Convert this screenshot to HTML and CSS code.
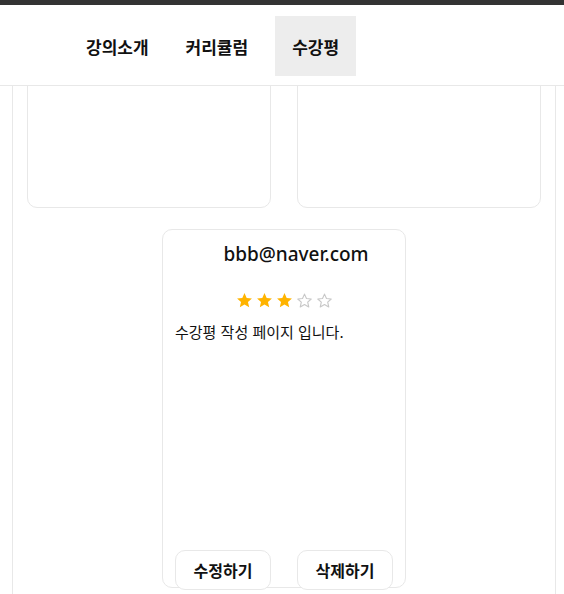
FILE: index.html
```html
<!DOCTYPE html>
<html lang="ko">
<head>
<meta charset="utf-8">
<title>수강평</title>
<link rel="stylesheet" href="styles.css">
</head>
<body>
<div class="topbar"></div>
<header class="header">
  <nav class="nav">
    <a class="nav-item">강의소개</a>
    <a class="nav-item">커리큘럼</a>
    <a class="nav-item active">수강평</a>
  </nav>
</header>
<main class="main">
  <div class="container">
    <div class="reviews">
      <div class="card card-short"></div>
      <div class="card card-short"></div>
      <div class="card review">
        <div class="email">bbb@naver.com</div>
        <div class="stars">
          <svg class="star on" viewBox="0 0 24 24"><path d="M12 1.5l3.1 6.9 7.4.7-5.6 5 1.7 7.4L12 17.6l-6.6 3.9 1.7-7.4-5.6-5 7.4-.7z"/></svg>
          <svg class="star on" viewBox="0 0 24 24"><path d="M12 1.5l3.1 6.9 7.4.7-5.6 5 1.7 7.4L12 17.6l-6.6 3.9 1.7-7.4-5.6-5 7.4-.7z"/></svg>
          <svg class="star on" viewBox="0 0 24 24"><path d="M12 1.5l3.1 6.9 7.4.7-5.6 5 1.7 7.4L12 17.6l-6.6 3.9 1.7-7.4-5.6-5 7.4-.7z"/></svg>
          <svg class="star off" viewBox="0 0 24 24"><path d="M12 3l2.8 6.2 6.7.7-5 4.5 1.5 6.7L12 17.6l-6 3.5 1.5-6.7-5-4.5 6.7-.7z"/></svg>
          <svg class="star off" viewBox="0 0 24 24"><path d="M12 3l2.8 6.2 6.7.7-5 4.5 1.5 6.7L12 17.6l-6 3.5 1.5-6.7-5-4.5 6.7-.7z"/></svg>
        </div>
        <p class="content">수강평 작성 페이지 입니다.</p>
        <div class="actions">
          <button class="btn">수정하기</button>
          <button class="btn">삭제하기</button>
        </div>
      </div>
    </div>
  </div>
</main>
</body>
</html>
```
FILE: styles.css
```css
* { box-sizing: border-box; }
html, body { margin: 0; padding: 0; }
body {
  width: 564px;
  height: 594px;
  overflow: hidden;
  background: #fff;
  font-family: "Noto Sans CJK KR", "Noto Sans", sans-serif;
  color: #000;
}
.topbar { height: 5px; background: #333; }
.header {
  height: 81px;
  border-bottom: 1px solid #e8e8e8;
  padding-top: 11px;
}
.nav {
  display: flex;
  gap: 3px;
  padding-left: 69px;
}
.nav-item {
  display: flex;
  align-items: center;
  height: 60px;
  padding: 0 17px;
  font-size: 17px;
  font-weight: 700;
  color: #111;
  text-decoration: none;
}
.nav-item:nth-child(3) { margin-left: 7px; }
.nav-item.active { background: #ededed; }

.main { height: 508px; overflow: hidden; }
.container {
  display: flow-root;
  margin-left: 12px;
  width: 544px;
  height: 100%;
  border-left: 1px solid #e8e8e8;
  border-right: 1px solid #e8e8e8;
  padding: 0 14px;
}
.reviews {
  display: flex;
  flex-wrap: wrap;
  justify-content: center;
  column-gap: 26px;
  row-gap: 21px;
  margin-top: -78px;
}
.card {
  width: 244px;
  border: 1px solid #e8e8e8;
  border-radius: 10px;
  background: #fff;
}
.card-short { height: 200px; }
.card.review {
  height: 359px;
  display: flex;
  flex-direction: column;
  padding: 0 12px;
}
.email {
  margin-top: 12px;
  padding-left: 24px;
  text-align: center;
  font-family: "Noto Sans", sans-serif;
  font-size: 19px;
  font-weight: 500;
  line-height: 24px;
  color: #111;
}
.stars {
  display: flex;
  justify-content: center;
  gap: 3px;
  margin-top: 26px;
  height: 16px;
}
.star { width: 17px; height: 17px; }
.star.on path { fill: #ffb400; }
.star.off path { fill: none; stroke: #c8c8c8; stroke-width: 1.6; stroke-linejoin: round; }
.content {
  margin: 14px 0 0;
  font-size: 15px;
  line-height: 20px;
  color: #111;
}
.actions {
  margin-top: auto;
  margin-bottom: -3px;
  display: flex;
  justify-content: space-between;
}
.btn {
  width: 96px;
  height: 40px;
  background: #fff;
  border: 1px solid #e8e8e8;
  border-radius: 10px;
  font-family: "Noto Sans CJK KR", sans-serif;
  font-size: 16px;
  font-weight: 700;
  color: #111;
  padding: 0;
}
```
